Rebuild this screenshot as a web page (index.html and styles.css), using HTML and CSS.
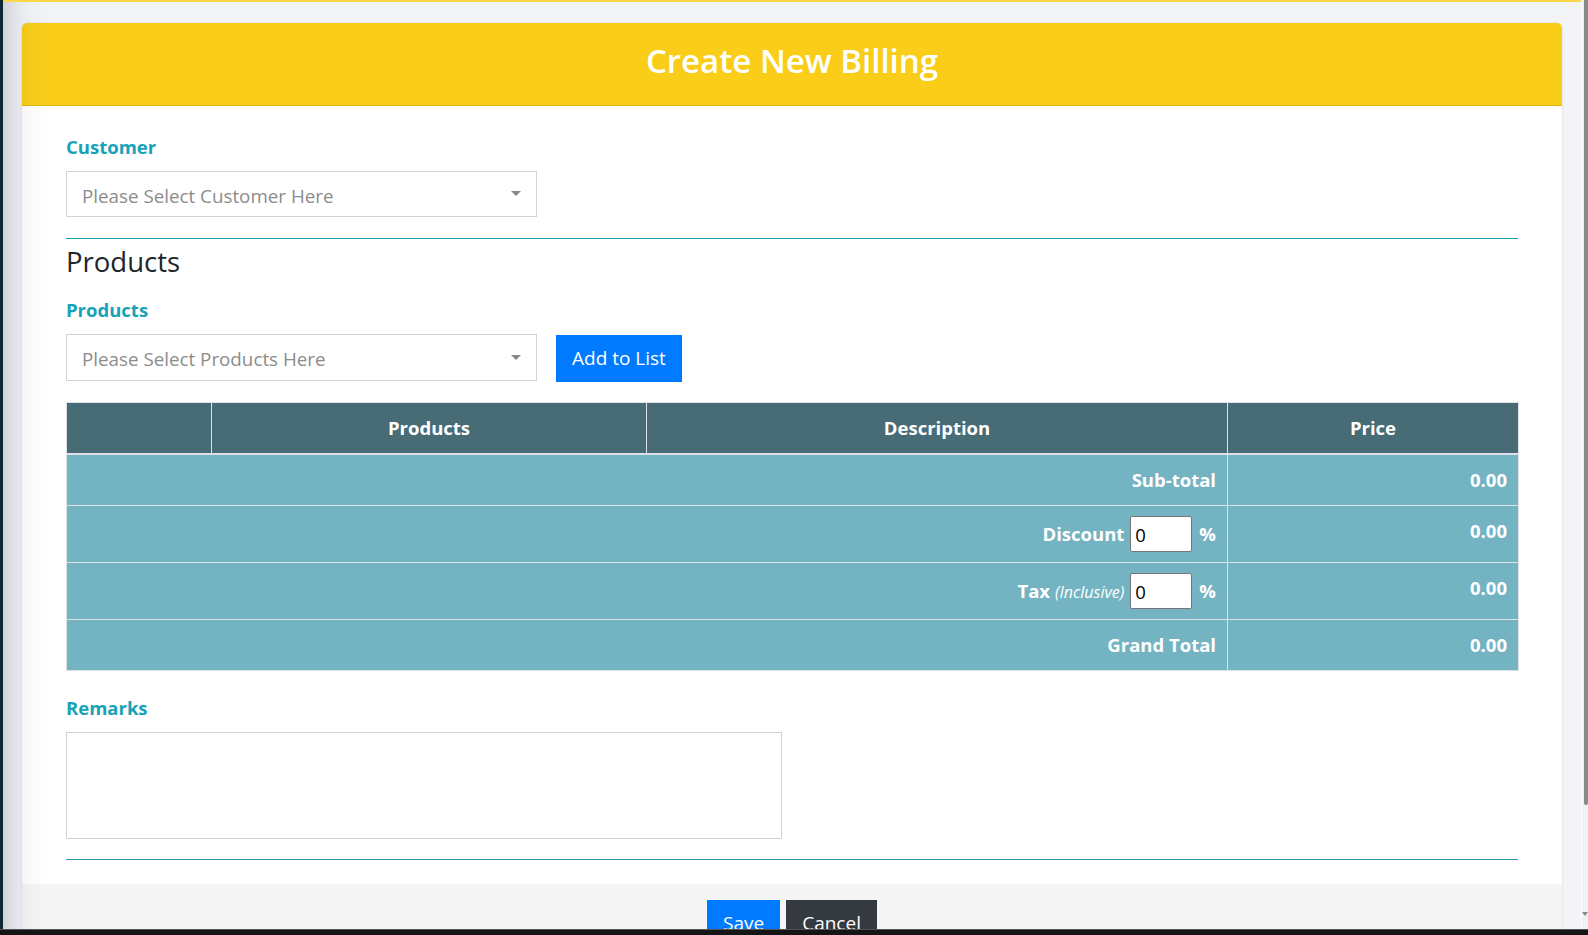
FILE: index.html
```html
<!DOCTYPE html>
<html lang="en">
<head>
<meta charset="utf-8">
<title>Create New Billing</title>
<link rel="stylesheet" href="styles.css">
</head>
<body>
<div class="screen">
  <div class="stage">
    <div class="edge"></div>
    <main class="page">
      <div class="left-shade"></div>
      <div class="card">
        <header class="card-header">
          <h1 class="card-title">Create New Billing</h1>
        </header>
        <section class="card-body">
          <label class="field-label">Customer</label>
          <div class="select">
            <span class="placeholder">Please Select Customer Here</span>
            <i class="caret"></i>
          </div>
          <div class="rule"></div>
          <h2 class="section-title">Products</h2>
          <label class="field-label">Products</label>
          <div class="picker-row">
            <div class="select">
              <span class="placeholder">Please Select Products Here</span>
              <i class="caret"></i>
            </div>
            <button class="btn btn-primary">Add to List</button>
          </div>
          <table class="bill-table">
            <colgroup>
              <col class="c1"><col class="c2"><col class="c3"><col class="c4">
            </colgroup>
            <thead>
              <tr><th></th><th>Products</th><th>Description</th><th>Price</th></tr>
            </thead>
            <tbody>
              <tr><td colspan="3" class="label-cell">Sub-total</td><td class="value-cell">0.00</td></tr>
              <tr>
                <td colspan="3" class="label-cell">
                  <div class="inline-field"><span>Discount</span><input class="num-input" type="text" value="0"><span>%</span></div>
                </td>
                <td class="value-cell">0.00</td>
              </tr>
              <tr>
                <td colspan="3" class="label-cell">
                  <div class="inline-field"><span>Tax <em class="note">(Inclusive)</em></span><input class="num-input" type="text" value="0"><span>%</span></div>
                </td>
                <td class="value-cell">0.00</td>
              </tr>
              <tr><td colspan="3" class="label-cell">Grand Total</td><td class="value-cell">0.00</td></tr>
            </tbody>
          </table>
          <label class="field-label remarks-label">Remarks</label>
          <textarea class="remarks"></textarea>
          <div class="rule rule-bottom"></div>
        </section>
        <footer class="card-footer">
          <button class="btn btn-primary">Save</button>
          <button class="btn btn-dark">Cancel</button>
        </footer>
      </div>
    </main>
    <div class="scrollbar">
      <div class="thumb"></div>
      <i class="scroll-arrow"></i>
    </div>
  </div>
  <div class="taskbar"></div>
</div>
</body>
</html>
```

FILE: styles.css
```css
* { box-sizing: border-box; }

html, body {
  margin: 0;
  padding: 0;
  width: 1588px;
  height: 935px;
  overflow: hidden;
  font-family: "Open Sans", "Noto Sans", sans-serif;
  color: #212529;
}

.screen {
  width: 1588px;
  height: 935px;
  display: flex;
  flex-direction: column;
}

.stage {
  height: 929px;
  display: flex;
}

.edge {
  width: 3px;
  background: #0c2931;
  flex: none;
}

.page {
  position: relative;
  flex: 1;
  background: #f3f4f8;
  border-top: 2px solid #fbd84b;
  padding: 21px 19px 0 19px;
  overflow: hidden;
}

.left-shade {
  position: absolute;
  left: 0;
  top: 0;
  bottom: 0;
  width: 46px;
  background: linear-gradient(to right, rgba(40, 44, 60, 0.16), rgba(40, 44, 60, 0.05) 18px, rgba(40, 44, 60, 0.02) 28px, rgba(40, 44, 60, 0) 46px);
  pointer-events: none;
  z-index: 2;
}

.card {
  width: 1540px;
  background: #fff;
  border-radius: 5px 5px 0 0;
  box-shadow: 0 0 2px rgba(0, 0, 0, 0.18);
}

.card-header {
  height: 83px;
  background: #f9cd18;
  border-bottom: 1px solid #e2b80e;
  border-radius: 5px 5px 0 0;
  display: flex;
  align-items: center;
  justify-content: center;
  padding-bottom: 7px;
}

.card-title {
  margin: 0;
  color: #fff;
  font-size: 33px;
  font-weight: 600;
  line-height: 42px;
}

.card-body {
  padding: 29px 44px 24px 44px;
}

.field-label {
  display: block;
  color: #17a2b8;
  font-weight: 700;
  font-size: 18.5px;
  line-height: 24px;
  margin-bottom: 12px;
}

.select {
  position: relative;
  width: 471px;
  height: 46px;
  border: 1px solid #ced4da;
  display: flex;
  align-items: center;
  padding: 3px 15px 0 15px;
  background: #fff;
}

.placeholder {
  color: #8c8c8c;
  font-size: 18.8px;
  flex: 1;
}

.caret {
  width: 0;
  height: 0;
  border-left: 5px solid transparent;
  border-right: 5px solid transparent;
  border-top: 5px solid #888;
  margin-top: -4px;
}

.rule {
  margin-top: 21px;
  height: 1px;
  background: #17a2b8;
}

.section-title {
  margin: 6px 0 0 0;
  font-size: 27.5px;
  font-weight: 400;
  line-height: 34px;
  color: #212529;
}

.section-title + .field-label {
  margin-top: 19px;
}

.picker-row {
  display: flex;
  align-items: flex-start;
  gap: 19px;
}

.picker-row .select {
  height: 47px;
}

.btn {
  border: 0;
  border-radius: 0;
  height: 47px;
  padding: 0 16px;
  font-family: "Open Sans", "Noto Sans", sans-serif;
  font-size: 19px;
  color: #fff;
  line-height: 47px;
}

.picker-row .btn {
  margin-top: 1px;
}

.btn-primary { background: #007bff; }
.btn-dark { background: #343a40; }

.bill-table {
  width: 1452px;
  margin-top: 20px;
  border-collapse: collapse;
  table-layout: fixed;
}

.c1 { width: 145px; }
.c2 { width: 435px; }
.c3 { width: 581px; }
.c4 { width: 291px; }

.bill-table th {
  background: #476c75;
  color: #fff;
  font-weight: 700;
  font-size: 18.5px;
  line-height: 26px;
  padding: 12px;
  border: 1px solid #dee2e6;
  border-bottom: 2px solid #dee2e6;
  text-align: center;
}

.bill-table td {
  background: #74b3c2;
  color: #fff;
  font-weight: 700;
  font-size: 18.5px;
  line-height: 26px;
  padding: 12px 11px 12px 12px;
  border: 1px solid #dee2e6;
  vertical-align: top;
  text-align: right;
}

.bill-table td.label-cell {
  vertical-align: middle;
}

.inline-field {
  display: flex;
  justify-content: flex-end;
  align-items: center;
  gap: 6px;
  margin: -2px 0;
}

.inline-field span:last-child {
  margin-left: 1px;
}

.note {
  font-weight: 400;
  font-size: 16px;
}

.num-input {
  width: 62px;
  height: 36px;
  border: 1px solid #767676;
  border-radius: 2px;
  padding: 0 4px;
  font-family: "Open Sans", "Noto Sans", sans-serif;
  font-size: 18.5px;
  color: #000;
  background: #fff;
}

.remarks-label {
  margin-top: 25px;
}

.remarks {
  display: block;
  width: 716px;
  height: 107px;
  border: 1px solid #ced4da;
  resize: none;
  margin: 0;
}

.rule-bottom {
  margin-top: 20px;
  background: #2a9aae;
}

.card-footer {
  background: #f5f5f5;
  height: 60px;
  padding-top: 16px;
  display: flex;
  justify-content: center;
  gap: 6px;
}

.scrollbar {
  width: 7px;
  flex: none;
  background: #f1f1f3;
  border-left: 1px solid #fff;
  display: flex;
  flex-direction: column;
  align-items: flex-end;
}

.thumb {
  width: 4px;
  height: 805px;
  background: #8a8a8a;
  border-radius: 0 0 2px 2px;
}

.scroll-arrow {
  margin-top: auto;
  margin-bottom: 13px;
  width: 0;
  height: 0;
  border-left: 3px solid transparent;
  border-right: 3px solid transparent;
  border-top: 4px solid #8a8a8a;
}

.taskbar {
  height: 6px;
  background: #151515;
  border-top: 1px solid #555;
}
```
